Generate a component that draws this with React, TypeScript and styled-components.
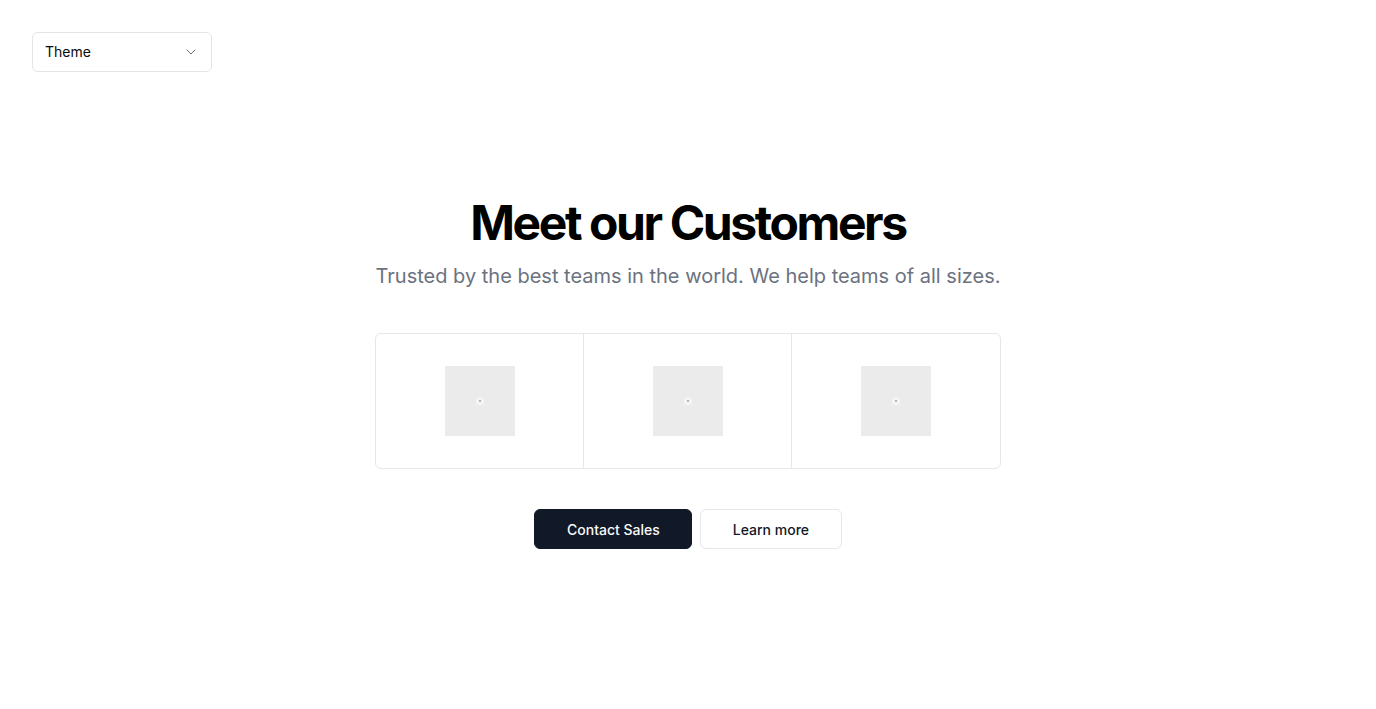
import React from 'react';
import styled, { createGlobalStyle } from 'styled-components';
import { ChevronDown } from 'lucide-react';

const GlobalStyle = createGlobalStyle`
  * { box-sizing: border-box; }
  body {
    margin: 0;
    background: #ffffff;
    font-family: Inter, "Noto Sans", sans-serif;
    color: #09090b;
  }
`;

const Page = styled.div`
  min-height: 709px;
  padding: 32px;
`;

const Select = styled.button`
  display: flex;
  align-items: center;
  justify-content: space-between;
  width: 180px;
  height: 40px;
  padding: 0 12px;
  border: 1px solid #e4e4e7;
  border-radius: 6px;
  background: #ffffff;
  font-family: inherit;
  font-size: 14px;
  line-height: 20px;
  color: #09090b;
  svg {
    color: #71717a;
  }
`;

const Section = styled.section`
  display: flex;
  flex-direction: column;
  align-items: center;
  padding-top: 127px;
`;

const Title = styled.h1`
  margin: 0;
  font-size: 48px;
  line-height: 1;
  font-weight: 700;
  letter-spacing: -0.05em;
  color: #000000;
`;

const Subtitle = styled.p`
  margin: 15px 0 0;
  font-size: 20px;
  line-height: 28px;
  color: #6b7280;
`;

const Grid = styled.div`
  display: grid;
  grid-template-columns: repeat(3, 1fr);
  width: 626px;
  margin-top: 43px;
  border: 1px solid #e5e7eb;
  border-radius: 6px;
`;

const Cell = styled.div<{ $last?: boolean }>`
  display: flex;
  align-items: center;
  justify-content: center;
  padding: 32px 0;
  border-right: ${({ $last }) => ($last ? 'none' : '1px solid #e5e7eb')};
`;

const Logo = styled.div`
  display: flex;
  align-items: center;
  justify-content: center;
  width: 70px;
  height: 70px;
  background: #ebebeb;
`;

const Actions = styled.div`
  display: flex;
  gap: 8px;
  margin-top: 40px;
`;

const Button = styled.button<{ $primary?: boolean }>`
  height: 40px;
  padding: 0 31.5px;
  border-radius: 6px;
  font-family: inherit;
  font-size: 14px;
  font-weight: 500;
  border: 1px solid ${({ $primary }) => ($primary ? '#111827' : '#e5e7eb')};
  background: ${({ $primary }) => ($primary ? '#111827' : '#ffffff')};
  color: ${({ $primary }) => ($primary ? '#f9fafb' : '#111827')};
`;

const ImageMark = () => (
  <svg width="10" height="10" viewBox="0 0 10 10">
    <circle cx="5" cy="5" r="4" fill="#f6f6f6" />
    <circle cx="5" cy="5" r="1.2" fill="#b5b5b5" />
  </svg>
);

const App: React.FC = () => {
  const customers = ['Acme', 'Globex', 'Initech'];

  return (
    <Page>
      <GlobalStyle />
      <Select>
        Theme
        <ChevronDown size={16} strokeWidth={1.5} />
      </Select>
      <Section>
        <Title>Meet our Customers</Title>
        <Subtitle>Trusted by the best teams in the world. We help teams of all sizes.</Subtitle>
        <Grid>
          {customers.map((name, i) => (
            <Cell key={name} $last={i === customers.length - 1}>
              <Logo aria-label={name}>
                <ImageMark />
              </Logo>
            </Cell>
          ))}
        </Grid>
        <Actions>
          <Button $primary>Contact Sales</Button>
          <Button>Learn more</Button>
        </Actions>
      </Section>
    </Page>
  );
};

export default App;
